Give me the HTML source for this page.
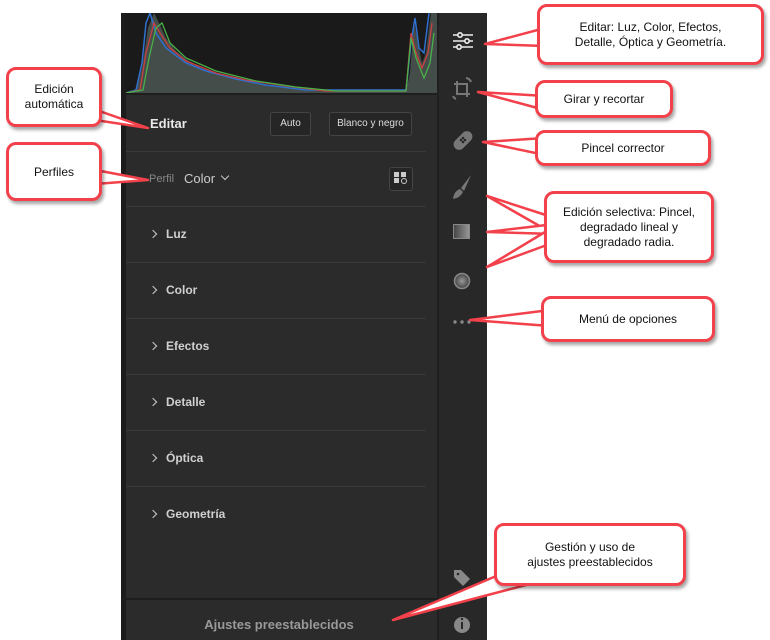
<!DOCTYPE html><html><head><meta charset="utf-8"><style>
body{margin:0;width:770px;height:640px;background:#fff;position:relative;overflow:hidden;font-family:"Liberation Sans",sans-serif}
.p{position:absolute}
.main{left:121px;top:13px;width:316px;height:627px;background:#2b2b2b}
.side{left:437px;top:13px;width:48px;height:627px;background:#282828;border-left:2px solid #1f1f1f}
.hist{left:126px;top:13px;width:311px;height:80px;background:#1a1a1a}
.sep{position:absolute;left:126px;width:300px;height:1px;background:#3a3a3a}
.row{position:absolute;left:150px;color:#d0d0d0;font-size:12px;font-weight:bold}
.row:before{content:"";display:inline-block;width:5px;height:5px;border-right:1.5px solid #ccc;border-top:1.5px solid #ccc;transform:rotate(45deg);margin-right:10px;position:relative;top:-1px}
.btn{position:absolute;border:1px solid #444;border-radius:3px;color:#ddd;font-size:10px;text-align:center;line-height:22px;height:22px;background:#262626}
.c{position:absolute;background:#fff;border:3px solid #f2414b;border-radius:10px;box-shadow:2px 3px 3px rgba(0,0,0,.35);font-size:12px;color:#111;text-align:center;display:flex;align-items:center;justify-content:center;line-height:15px;box-sizing:border-box}
</style></head><body>
<div class="p main"></div>
<div class="p" style="left:121px;top:13px;width:5px;height:627px;background:#1c1c1c"></div>
<div class="p hist"></div>
<svg class="p" style="left:126px;top:13px" width="311" height="80">
<path d="M0,80 L10,78 L16,55 L22,15 L28,0 L34,12 L40,25 L50,38 L60,46 L75,55 L95,62 L120,68 L150,74 L180,77 L200,78 L280,78 L284,60 L288,10 L292,30 L296,50 L300,40 L305,0 L311,0 L311,80Z" fill="#4a5350" opacity=".9"/>
<path d="M0,80 L10,77 L16,50 L20,10 L24,0 L30,20 L40,35 L60,50 L80,58 L110,66 L140,72 L180,77 L280,77 L285,30 L289,5 L293,35 L298,40 L303,0" fill="none" stroke="#2f6fd0" stroke-width="1.5"/>
<path d="M0,80 L14,77 L20,40 L28,10 L34,20 L44,35 L60,48 L90,60 L120,67 L160,73 L200,78 L280,78 L285,20 L290,40 L296,55 L302,40 L306,10" fill="none" stroke="#c84040" stroke-width="1.3"/>
<path d="M0,80 L17,77 L23,45 L30,15 L36,10 L44,30 L60,45 L90,58 L130,68 L170,74 L210,78 L280,78 L285,25 L290,45 L298,65 L304,50 L308,20" fill="none" stroke="#48b048" stroke-width="1.3"/>
</svg>
<div class="p" style="left:126px;top:93px;width:311px;height:2px;background:#1e1e1e"></div>
<div class="p" style="left:150px;top:116px;color:#e8e8e8;font-size:13px;font-weight:bold">Editar</div>
<div class="btn" style="left:270px;top:112px;width:39px">Auto</div>
<div class="btn" style="left:329px;top:112px;width:81px">Blanco y negro</div>
<div class="sep" style="top:151px"></div>
<div class="p" style="left:149px;top:173px;color:#888;font-size:11px">Perfil</div>
<div class="p" style="left:184px;top:171px;color:#ccc;font-size:13px">Color</div>
<div class="p" style="left:222px;top:173px;width:5px;height:5px;border-right:1.5px solid #ccc;border-bottom:1.5px solid #ccc;transform:rotate(45deg)"></div>
<div class="p" style="left:389px;top:167px;width:22px;height:22px;border:1px solid #444;border-radius:3px;background:#262626"></div>
<div class="p" style="left:394px;top:172px;width:5px;height:5px;background:#ccc;box-shadow:7px 0 #ccc,0 6px #ccc"></div>
<div class="p" style="left:401px;top:178px;width:4px;height:4px;border:1.3px solid #ccc;border-radius:50%"></div>
<div class="sep" style="top:206px"></div>
<div class="row" style="top:227px">Luz</div>
<div class="sep" style="top:262px"></div>
<div class="row" style="top:283px">Color</div>
<div class="sep" style="top:318px"></div>
<div class="row" style="top:339px">Efectos</div>
<div class="sep" style="top:374px"></div>
<div class="row" style="top:395px">Detalle</div>
<div class="sep" style="top:430px"></div>
<div class="row" style="top:451px">Óptica</div>
<div class="sep" style="top:486px"></div>
<div class="row" style="top:507px">Geometría</div>
<div class="p" style="left:121px;top:598px;width:316px;height:2px;background:#1e1e1e"></div>
<div class="p" style="left:121px;top:617px;width:316px;text-align:center;color:#999;font-size:13px;font-weight:bold">Ajustes preestablecidos</div>
<div class="p side"></div>
<svg class="p" style="left:437px;top:13px" width="50" height="627">
<g stroke="#eee" stroke-width="1.6" fill="none"><path d="M16,22h20M16,28h20M16,34h20"/><circle cx="23" cy="22" r="2.2" fill="#282828"/><circle cx="30" cy="28" r="2.2" fill="#282828"/><circle cx="22" cy="34" r="2.2" fill="#282828"/></g>
<g stroke="#777" stroke-width="2" fill="none"><path d="M20,68v13h13M17,71h13v13"/><path d="M29,65a6,6 0 0 1 5,4M19,86a6,6 0 0 1-3,-3"/></g>
<rect x="15" y="122" width="22" height="11" rx="5.5" transform="rotate(-45 26 127.5)" fill="#777"/>
<g fill="#282828"><circle cx="24" cy="127" r="1.3"/><circle cx="28" cy="127" r="1.3"/><circle cx="26" cy="125" r="1.3"/><circle cx="26" cy="129" r="1.3"/></g>
<path d="M34,162 L24,175 L27,178 Z" fill="#777"/><path d="M23,176 Q17,178 16,186 Q23,185 26,179Z" fill="#777"/>
<defs><linearGradient id="g"><stop offset="0" stop-color="#444"/><stop offset="1" stop-color="#999"/></linearGradient><radialGradient id="r"><stop offset="0" stop-color="#999"/><stop offset="1" stop-color="#444"/></radialGradient></defs>
<rect x="16.5" y="211.5" width="16" height="14" fill="url(#g)" stroke="#888"/>
<circle cx="25" cy="268" r="7.5" fill="url(#r)" stroke="#888" stroke-width="1.5"/>
<g fill="#888"><circle cx="18" cy="309" r="1.7"/><circle cx="25" cy="309" r="1.7"/><circle cx="32" cy="309" r="1.7"/></g>
<path d="M17,557 v7 l9,9 l7,-7 l-9,-9z" fill="#888"/><circle cx="21" cy="561" r="1.3" fill="#282828"/>
<circle cx="25" cy="612" r="8" fill="#888"/><path d="M25,609v7" stroke="#282828" stroke-width="2"/><circle cx="25" cy="606" r="1.2" fill="#282828"/>
</svg>
<svg class="p" style="left:0;top:0" width="770" height="640">
<g fill="#fff" stroke="#f2414b" stroke-width="2.5" stroke-linejoin="round">
<polygon points="85,106 148,128 95,120"/>
<polygon points="85,168 148,180 95,184"/>
<polygon points="545,28 485,44 545,46"/>
<polygon points="545,96 478,92 545,110"/>
<polygon points="545,138 483,142 545,155"/>
<polygon points="555,218 487,196 550,232"/>
<polygon points="555,224 487,232 555,234"/>
<polygon points="555,226 487,267 555,242"/>
<polygon points="550,310 470,320 550,326"/>
<polygon points="515,568 393,620 545,580"/>
</g></svg>
<div class="c" style="left:6px;top:67px;width:96px;height:60px">Edición<br>automática</div>
<div class="c" style="left:6px;top:142px;width:96px;height:59px;align-items:flex-start;padding-top:20px">Perfiles</div>
<div class="c" style="left:537px;top:4px;width:227px;height:61px">Editar: Luz, Color, Efectos,<br>Detalle, Óptica y Geometría.</div>
<div class="c" style="left:535px;top:80px;width:138px;height:38px">Girar y recortar</div>
<div class="c" style="left:535px;top:130px;width:176px;height:36px">Pincel corrector</div>
<div class="c" style="left:544px;top:191px;width:170px;height:72px">Edición selectiva: Pincel,<br>degradado lineal y<br>degradado radia.</div>
<div class="c" style="left:541px;top:296px;width:174px;height:46px">Menú de opciones</div>
<div class="c" style="left:494px;top:523px;width:192px;height:63px;align-items:flex-start;padding-top:14px">Gestión y uso de<br>ajustes preestablecidos</div>
</body></html>
